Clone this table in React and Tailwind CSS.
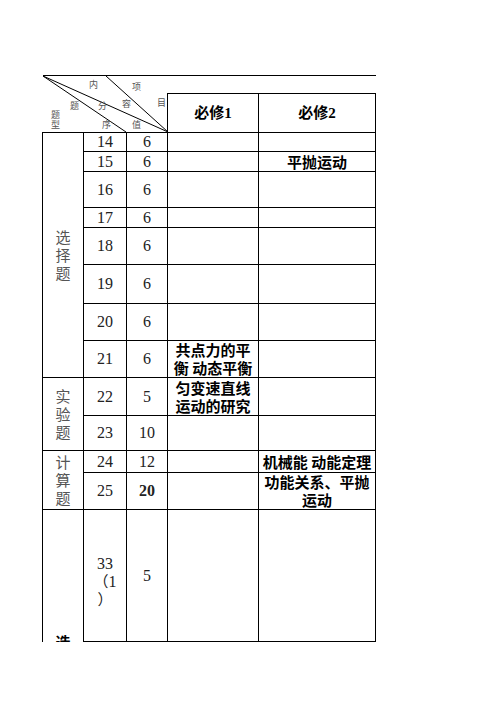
import React from 'react';

const cjk = "font-['Noto_Sans_CJK_SC',sans-serif]";

const headLabels = [
  ['内', 'left-[51px] top-[8px]'],
  ['项', 'left-[94px] top-[10px]'],
  ['目', 'left-[119px] top-[26px]'],
  ['题', 'left-[32px] top-[29px]'],
  ['分', 'left-[60px] top-[29px]'],
  ['容', 'left-[84px] top-[27px]'],
  ['题', 'left-[13px] top-[38px]'],
  ['型', 'left-[13px] top-[48px]'],
  ['序', 'left-[64px] top-[48px]'],
  ['值', 'left-[94px] top-[48px]'],
];

function DiagonalHead(){
  return (
    <div className="relative h-[56px] w-full">
      <svg className="absolute inset-0" width="125" height="56" viewBox="0 0 125 56" preserveAspectRatio="none">
        <line x1="0" y1="0" x2="83" y2="56" stroke="#000" strokeWidth="1"/>
        <line x1="0" y1="0" x2="125" y2="56" stroke="#000" strokeWidth="1"/>
        <line x1="63" y1="0" x2="125" y2="56" stroke="#000" strokeWidth="1"/>
      </svg>
      {headLabels.map(([t,pos],i)=>(
        <span key={i} className={`absolute ${pos} -translate-x-1/2 -translate-y-1/2 text-[9px] leading-none text-[#555] ${cjk}`}>{t}</span>
      ))}
    </div>
  );
}

function Num({children, bold}){
  return <td className={`border border-black text-center text-[16px] leading-[18px] text-[#222] ${bold ? 'font-bold' : ''}`}>{children}</td>;
}

function Txt({children}){
  return <td className={`border border-black text-center align-middle text-[15px] leading-[18px] font-bold text-black ${cjk}`}>{children}</td>;
}

function Group({chars}){
  return (
    <div className={`flex flex-col items-center text-[15px] leading-[18px] text-[#555] ${cjk}`}>
      {chars.split('').map((c,i)=><div key={i} className="h-[18px]">{c}</div>)}
    </div>
  );
}

export default function App(){
  return (
    <div className="min-h-[702px] w-[496px] bg-white pt-[75px] pl-[42px] font-['Liberation_Serif','Noto_Sans_CJK_SC',serif]">
      <table className="table-fixed w-[333px]">
        <colgroup>
          <col className="w-[41px]"/>
          <col className="w-[43px]"/>
          <col className="w-[41px]"/>
          <col className="w-[91px]"/>
          <col className="w-[117px]"/>
        </colgroup>
        <tbody>
          <tr className="h-[18px]">
            <td colSpan={3} rowSpan={2} className="border-t border-b border-black p-0"><DiagonalHead/></td>
            <td colSpan={2} className="border-t border-black"></td>
          </tr>
          <tr className="h-[38px]">
            <td className="border border-black text-center text-[15px] font-bold">必修1</td>
            <td className="border border-black text-center text-[15px] font-bold">必修2</td>
          </tr>

          <tr className="h-[19px]">
            <td rowSpan={8} className="border border-black align-middle"><Group chars="选择题"/></td>
            <Num>14</Num><Num>6</Num><Txt></Txt><Txt></Txt>
          </tr>
          <tr className="h-[20px]"><Num>15</Num><Num>6</Num><Txt></Txt><Txt>平抛运动</Txt></tr>
          <tr className="h-[36px]"><Num>16</Num><Num>6</Num><Txt></Txt><Txt></Txt></tr>
          <tr className="h-[20px]"><Num>17</Num><Num>6</Num><Txt></Txt><Txt></Txt></tr>
          <tr className="h-[37px]"><Num>18</Num><Num>6</Num><Txt></Txt><Txt></Txt></tr>
          <tr className="h-[39px]"><Num>19</Num><Num>6</Num><Txt></Txt><Txt></Txt></tr>
          <tr className="h-[37px]"><Num>20</Num><Num>6</Num><Txt></Txt><Txt></Txt></tr>
          <tr className="h-[37px]"><Num>21</Num><Num>6</Num><Txt>共点力的平<br/>衡 动态平衡</Txt><Txt></Txt></tr>

          <tr className="h-[38px]">
            <td rowSpan={2} className="border border-black align-middle"><Group chars="实验题"/></td>
            <Num>22</Num><Num>5</Num><Txt>匀变速直线<br/>运动的研究</Txt><Txt></Txt>
          </tr>
          <tr className="h-[35px]"><Num>23</Num><Num>10</Num><Txt></Txt><Txt></Txt></tr>

          <tr className="h-[22px]">
            <td rowSpan={2} className="border border-black align-middle"><Group chars="计算题"/></td>
            <Num>24</Num><Num>12</Num><Txt></Txt><Txt><span className="whitespace-nowrap">机械能 动能定理</span></Txt>
          </tr>
          <tr className="h-[35px]"><Num>25</Num><Num bold>20</Num><Txt></Txt><Txt>功能关系、平抛<br/>运动</Txt></tr>

          <tr className="h-[132px]">
            <td className="border-l border-r border-black align-bottom">
              <div className="flex h-[131px] flex-col items-center justify-end overflow-hidden">
                <span className={`mb-[-8px] text-[15px] leading-[17px] font-bold text-black ${cjk}`}>选</span>
              </div>
            </td>
            <td className="border border-black text-center text-[16px] leading-[17px] text-[#222]">
              <div className="pt-[10px]">33</div>
              <div><span className={`text-[15px] ${cjk}`}>（</span>1</div>
              <div className={`text-[15px] ${cjk}`}>）</div>
            </td>
            <Num>5</Num><Txt></Txt><Txt></Txt>
          </tr>
        </tbody>
      </table>
    </div>
  );
}
